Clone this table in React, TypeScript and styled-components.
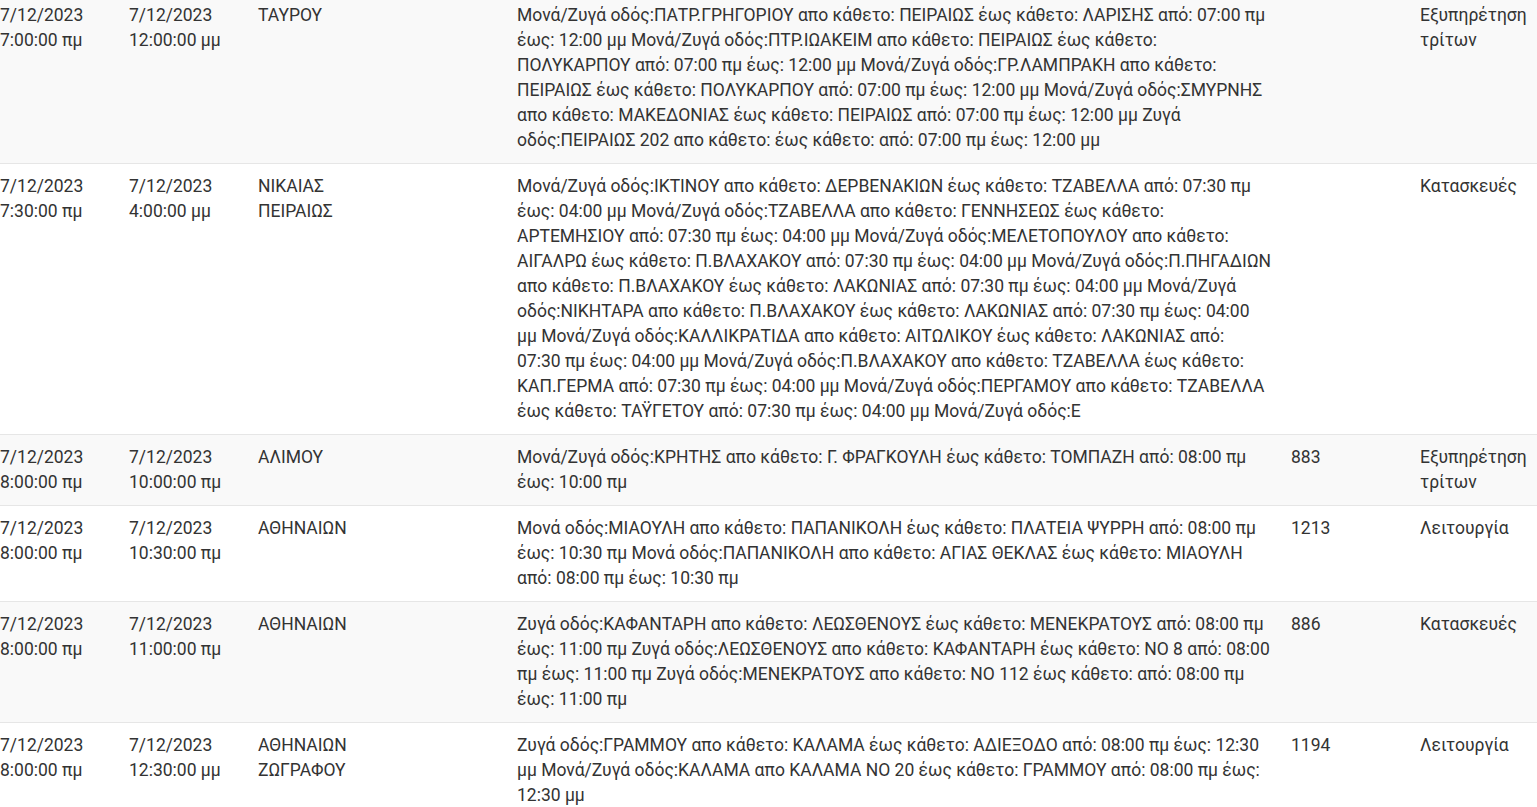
import { createGlobalStyle, styled } from "styled-components";

const GlobalStyle = createGlobalStyle`
    html, body {
        margin: 0;
        padding: 0;
        background: #ffffff;
        overflow: hidden;
    }
    body {
        font-family: Roboto, "Noto Sans", "Liberation Sans", sans-serif;
        color: #333333;
    }
`;

const Table = styled.table`
    width: 1537px;
    margin-top: -8px;
    border-collapse: collapse;
    table-layout: fixed;
    font-size: 17.5px;
    line-height: 25px;
`;

const Col = styled.col<{ $w: number }>`
    width: ${(p) => p.$w}px;
`;

const Row = styled.tr<{ $striped: boolean }>`
    background: ${(p) => (p.$striped ? "#f9f9f9" : "#ffffff")};
    border-top: 1px solid #e6e6e6;
`;

const Cell = styled.td`
    padding: 10px 20px 10px 0;
    vertical-align: top;
    text-align: left;
    color: #333333;
`;

type Item = {
    start: string[];
    end: string[];
    area: string[];
    desc: string;
    code: string;
    kind: string;
};

const widths = [129, 129, 259, 774, 129, 117];

const items: Item[] = [
    {
        start: ["7/12/2023", "7:00:00 πμ"],
        end: ["7/12/2023", "12:00:00 μμ"],
        area: ["ΤΑΥΡΟΥ"],
        desc: "Μονά/Ζυγά οδός:ΠΑΤΡ.ΓΡΗΓΟΡΙΟΥ απο κάθετο: ΠΕΙΡΑΙΩΣ έως κάθετο: ΛΑΡΙΣΗΣ από: 07:00 πμ έως: 12:00 μμ Μονά/Ζυγά οδός:ΠΤΡ.ΙΩΑΚΕΙΜ απο κάθετο: ΠΕΙΡΑΙΩΣ έως κάθετο: ΠΟΛΥΚΑΡΠΟΥ από: 07:00 πμ έως: 12:00 μμ Μονά/Ζυγά οδός:ΓΡ.ΛΑΜΠΡΑΚΗ απο κάθετο: ΠΕΙΡΑΙΩΣ έως κάθετο: ΠΟΛΥΚΑΡΠΟΥ από: 07:00 πμ έως: 12:00 μμ Μονά/Ζυγά οδός:ΣΜΥΡΝΗΣ απο κάθετο: ΜΑΚΕΔΟΝΙΑΣ έως κάθετο: ΠΕΙΡΑΙΩΣ από: 07:00 πμ έως: 12:00 μμ Ζυγά οδός:ΠΕΙΡΑΙΩΣ 202 απο κάθετο: έως κάθετο: από: 07:00 πμ έως: 12:00 μμ",
        code: "",
        kind: "Εξυπηρέτηση τρίτων",
    },
    {
        start: ["7/12/2023", "7:30:00 πμ"],
        end: ["7/12/2023", "4:00:00 μμ"],
        area: ["ΝΙΚΑΙΑΣ", "ΠΕΙΡΑΙΩΣ"],
        desc: "Μονά/Ζυγά οδός:ΙΚΤΙΝΟΥ απο κάθετο: ΔΕΡΒΕΝΑΚΙΩΝ έως κάθετο: ΤΖΑΒΕΛΛΑ από: 07:30 πμ έως: 04:00 μμ Μονά/Ζυγά οδός:ΤΖΑΒΕΛΛΑ απο κάθετο: ΓΕΝΝΗΣΕΩΣ έως κάθετο: ΑΡΤΕΜΗΣΙΟΥ από: 07:30 πμ έως: 04:00 μμ Μονά/Ζυγά οδός:ΜΕΛΕΤΟΠΟΥΛΟΥ απο κάθετο: ΑΙΓΑΛΡΩ έως κάθετο: Π.ΒΛΑΧΑΚΟΥ από: 07:30 πμ έως: 04:00 μμ Μονά/Ζυγά οδός:Π.ΠΗΓΑΔΙΩΝ απο κάθετο: Π.ΒΛΑΧΑΚΟΥ έως κάθετο: ΛΑΚΩΝΙΑΣ από: 07:30 πμ έως: 04:00 μμ Μονά/Ζυγά οδός:ΝΙΚΗΤΑΡΑ απο κάθετο: Π.ΒΛΑΧΑΚΟΥ έως κάθετο: ΛΑΚΩΝΙΑΣ από: 07:30 πμ έως: 04:00 μμ Μονά/Ζυγά οδός:ΚΑΛΛΙΚΡΑΤΙΔΑ απο κάθετο: ΑΙΤΩΛΙΚΟΥ έως κάθετο: ΛΑΚΩΝΙΑΣ από: 07:30 πμ έως: 04:00 μμ Μονά/Ζυγά οδός:Π.ΒΛΑΧΑΚΟΥ απο κάθετο: ΤΖΑΒΕΛΛΑ έως κάθετο: ΚΑΠ.ΓΕΡΜΑ από: 07:30 πμ έως: 04:00 μμ Μονά/Ζυγά οδός:ΠΕΡΓΑΜΟΥ απο κάθετο: ΤΖΑΒΕΛΛΑ έως κάθετο: ΤΑΫΓΕΤΟΥ από: 07:30 πμ έως: 04:00 μμ Μονά/Ζυγά οδός:Ε",
        code: "",
        kind: "Κατασκευές",
    },
    {
        start: ["7/12/2023", "8:00:00 πμ"],
        end: ["7/12/2023", "10:00:00 πμ"],
        area: ["ΑΛΙΜΟΥ"],
        desc: "Μονά/Ζυγά οδός:ΚΡΗΤΗΣ απο κάθετο: Γ. ΦΡΑΓΚΟΥΛΗ έως κάθετο: ΤΟΜΠΑΖΗ από: 08:00 πμ έως: 10:00 πμ",
        code: "883",
        kind: "Εξυπηρέτηση τρίτων",
    },
    {
        start: ["7/12/2023", "8:00:00 πμ"],
        end: ["7/12/2023", "10:30:00 πμ"],
        area: ["ΑΘΗΝΑΙΩΝ"],
        desc: "Μονά οδός:ΜΙΑΟΥΛΗ απο κάθετο: ΠΑΠΑΝΙΚΟΛΗ έως κάθετο: ΠΛΑΤΕΙΑ ΨΥΡΡΗ από: 08:00 πμ έως: 10:30 πμ Μονά οδός:ΠΑΠΑΝΙΚΟΛΗ απο κάθετο: ΑΓΙΑΣ ΘΕΚΛΑΣ έως κάθετο: ΜΙΑΟΥΛΗ από: 08:00 πμ έως: 10:30 πμ",
        code: "1213",
        kind: "Λειτουργία",
    },
    {
        start: ["7/12/2023", "8:00:00 πμ"],
        end: ["7/12/2023", "11:00:00 πμ"],
        area: ["ΑΘΗΝΑΙΩΝ"],
        desc: "Ζυγά οδός:ΚΑΦΑΝΤΑΡΗ απο κάθετο: ΛΕΩΣΘΕΝΟΥΣ έως κάθετο: ΜΕΝΕΚΡΑΤΟΥΣ από: 08:00 πμ έως: 11:00 πμ Ζυγά οδός:ΛΕΩΣΘΕΝΟΥΣ απο κάθετο: ΚΑΦΑΝΤΑΡΗ έως κάθετο: ΝΟ 8 από: 08:00 πμ έως: 11:00 πμ Ζυγά οδός:ΜΕΝΕΚΡΑΤΟΥΣ απο κάθετο: ΝΟ 112 έως κάθετο: από: 08:00 πμ έως: 11:00 πμ",
        code: "886",
        kind: "Κατασκευές",
    },
    {
        start: ["7/12/2023", "8:00:00 πμ"],
        end: ["7/12/2023", "12:30:00 μμ"],
        area: ["ΑΘΗΝΑΙΩΝ", "ΖΩΓΡΑΦΟΥ"],
        desc: "Ζυγά οδός:ΓΡΑΜΜΟΥ απο κάθετο: ΚΑΛΑΜΑ έως κάθετο: ΑΔΙΕΞΟΔΟ από: 08:00 πμ έως: 12:30 μμ Μονά/Ζυγά οδός:ΚΑΛΑΜΑ απο ΚΑΛΑΜΑ ΝΟ 20 έως κάθετο: ΓΡΑΜΜΟΥ από: 08:00 πμ έως: 12:30 μμ",
        code: "1194",
        kind: "Λειτουργία",
    },
];

const Lines = ({ parts }: { parts: string[] }) => (
    <>
        {parts.map((p, i) => (
            <span key={i}>
                {i > 0 && <br />}
                {p}
            </span>
        ))}
    </>
);

export default function App() {
    return (
        <>
            <GlobalStyle />
            <Table>
                <colgroup>
                    {widths.map((w, i) => (
                        <Col key={i} $w={w} />
                    ))}
                </colgroup>
                <tbody>
                    {items.map((it, i) => (
                        <Row key={i} $striped={i % 2 === 0}>
                            <Cell><Lines parts={it.start} /></Cell>
                            <Cell><Lines parts={it.end} /></Cell>
                            <Cell><Lines parts={it.area} /></Cell>
                            <Cell>{it.desc}</Cell>
                            <Cell>{it.code}</Cell>
                            <Cell>{it.kind}</Cell>
                        </Row>
                    ))}
                </tbody>
            </Table>
        </>
    );
}
